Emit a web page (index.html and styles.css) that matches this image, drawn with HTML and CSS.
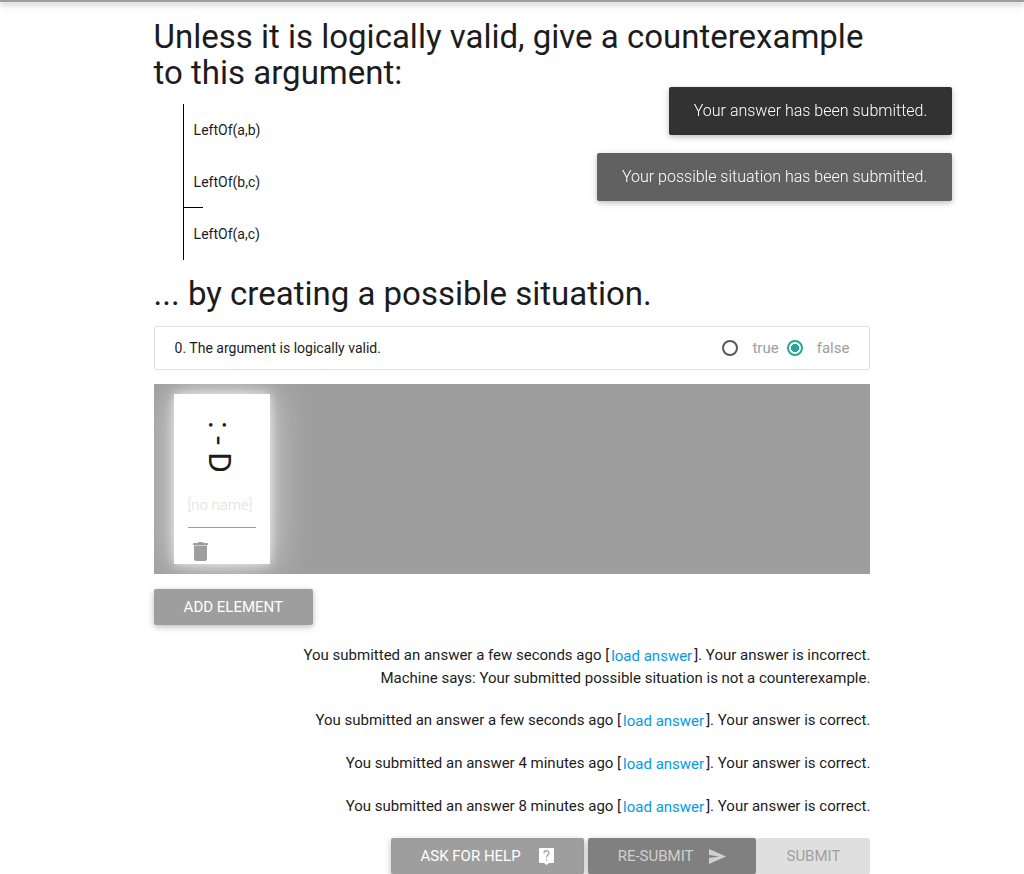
FILE: index.html
```html
<!DOCTYPE html>
<html lang="en">
<head>
<meta charset="utf-8">
<meta name="viewport" content="width=device-width, initial-scale=1">
<title>Create a counterexample</title>
<link rel="stylesheet" href="styles.css">
</head>
<body>
<header class="navbar"></header>
<main class="container">
  <h1 class="heading">Unless it is logically valid, give a counterexample to this argument:</h1>
  <div class="argument">
    <div class="premises">
      <div class="sentence">LeftOf(a,b)</div>
      <div class="sentence">LeftOf(b,c)</div>
    </div>
    <div class="sentence">LeftOf(a,c)</div>
  </div>
  <h2 class="heading">... by creating a possible situation.</h2>

  <div class="question" role="radiogroup" aria-labelledby="question-0">
    <span class="question-text" id="question-0">0. The argument is logically valid.</span>
    <label class="choice"><input class="radio" type="radio" name="valid" value="true">true</label>
    <label class="choice"><input class="radio" type="radio" name="valid" value="false" checked>false</label>
  </div>

  <section class="world">
    <div class="element">
      <div class="face"><span>:</span><span>-</span><span>D</span></div>
      <input class="name" type="text" placeholder="[no name]" aria-label="Name">
      <button class="trash" type="button" aria-label="Delete">
        <svg width="15" height="19" viewBox="0 0 15 19" fill="currentColor"><path d="M4 1 6 0h3l2 1h3q1 0 1 1v1H0V2q0-1 1-1zM1 4h13v13q0 2-2 2H3q-2 0-2-2z"/><path opacity=".5" d="M1 3h13v1H1z"/></svg>
      </button>
    </div>
  </section>
  <button class="btn" type="button">ADD ELEMENT</button>

  <section class="log">
    <p class="entry">You submitted an answer a few seconds ago [<a class="load" href="#">load answer</a>]. Your answer is incorrect.<br>Machine says: Your submitted possible situation is not a counterexample.</p>
    <p class="entry">You submitted an answer a few seconds ago [<a class="load" href="#">load answer</a>]. Your answer is correct.</p>
    <p class="entry">You submitted an answer 4 minutes ago [<a class="load" href="#">load answer</a>]. Your answer is correct.</p>
    <p class="entry">You submitted an answer 8 minutes ago [<a class="load" href="#">load answer</a>]. Your answer is correct.</p>
  </section>

  <div class="actions">
    <button class="btn help" type="button">ASK FOR HELP
      <svg width="15" height="17" viewBox="0 0 15 17"><path fill="#fff" d="M1 0h13q1 0 1 1v13q0 1-1 1H10l-2.5 2L5 15H1q-1 0-1-1V1q0-1 1-1z"/><path fill="none" stroke="#9e9e9e" stroke-width="1.2" d="M5 5.2C5 1.800 10 1.800 10 5c0 2-2.500 2.100-2.500 4.600M7.500 11v1.500"/></svg>
    </button>
    <button class="btn resubmit" type="button">RE-SUBMIT
      <svg width="17" height="15" viewBox="0 0 18 15" preserveAspectRatio="none" fill="currentColor"><path d="M0 0 18 7.500 0 15V9l11-1.500L0 6z"/></svg>
    </button>
    <button class="btn submit" type="button" disabled>SUBMIT</button>
  </div>
</main>
<div class="toasts" role="status">
  <div class="toast">Your answer has been submitted.</div>
  <div class="toast fading">Your possible situation has been submitted.</div>
</div>
</body>
</html>
```
FILE: styles.css
```css
* { box-sizing: border-box; }

body {
  margin: 0;
  background: #fff;
  color: #1c1c1c;
  font-family: Roboto, "Liberation Sans", sans-serif;
  font-size: 15px;
  line-height: 22px;
}

button, input { font-family: inherit; }

.navbar {
  height: 2px;
  background: #9e9e9e;
  box-shadow: 0 2px 5px rgba(0, 0, 0, 0.26), 0 2px 10px rgba(0, 0, 0, 0.2);
}

.container {
  width: 70%;
  margin: 0 auto;
  padding-top: 17px;
}

.heading {
  margin: 0;
  font-size: 33px;
  font-weight: 400;
  line-height: 36px;
}

.argument {
  margin: 13px 0 16px 29px;
  border-left: 1px solid #000;
  font-size: 14px;
}

.premises::after {
  content: "";
  display: block;
  width: 19px;
  height: 1px;
  margin-top: -1px;
  background: #000;
}

.sentence { padding: 15px 10px; }

.question {
  display: flex;
  align-items: center;
  gap: 8px;
  margin: 14px 0;
  padding: 10px 20px;
  border: 1px solid #e0e0e0;
  border-radius: 2px;
}

.question-text {
  flex: 1;
  font-size: 14px;
}

.choice {
  display: flex;
  align-items: center;
  gap: 14px;
  color: #9e9e9e;
}

.radio {
  appearance: none;
  width: 16px;
  height: 16px;
  margin: 0;
  border: 2px solid #5a5a5a;
  border-radius: 50%;
}

.radio:checked {
  border-color: #26a69a;
  background: radial-gradient(circle, #26a69a 4px, #fff 4px);
}

.world {
  display: flex;
  min-height: 190px;
  margin-bottom: 15px;
  padding: 10px 20px;
  overflow: hidden;
  background: #9e9e9e;
}

.element {
  display: flex;
  flex-direction: column;
  width: 96px;
  padding: 27px 14px 3px;
  background: #fff;
  box-shadow: 0 0 10px rgba(255, 255, 255, 0.7), 0 0 40px rgba(255, 255, 255, 0.7);
}

.face {
  display: flex;
  flex-direction: column;
  align-items: center;
  gap: 7px;
  height: 60px;
  padding-right: 3px;
  font-size: 32px;
  line-height: 32px;
}

.face span { writing-mode: vertical-rl; }

.name {
  width: 100%;
  height: 44px;
  margin: 3px 0 14px;
  padding: 0 0 2px;
  border: 0;
  border-bottom: 1px solid #9e9e9e;
  background: transparent;
  font-size: 15px;
  font-weight: 300;
}

.name::placeholder { color: #e0e0e0; opacity: 1; }

.trash {
  display: flex;
  align-self: flex-start;
  margin-left: 5px;
  padding: 0;
  border: 0;
  background: none;
  color: #9e9e9e;
}

.btn {
  display: flex;
  align-items: center;
  height: 36px;
  padding: 0 30px;
  border: 0;
  border-radius: 2px;
  background: #9e9e9e;
  box-shadow: 0 2px 5px rgba(0, 0, 0, 0.16), 0 2px 10px rgba(0, 0, 0, 0.12);
  color: #fff;
  font-size: 15px;
}

.log {
  margin: 19px 0 20px;
  text-align: right;
}

.entry { margin: 0 0 20px; }

.load {
  display: inline-block;
  padding: 0 2px;
  color: #039be5;
  text-decoration: none;
  vertical-align: middle;
}

.actions {
  display: flex;
  justify-content: flex-end;
}

.help { gap: 18px; margin-right: 4px; }

.resubmit {
  gap: 16px;
  background: #808080;
  color: #d0d0d0;
}

.submit {
  background: #dfdfdf;
  box-shadow: none;
  color: #9f9f9f;
}

.toasts {
  position: fixed;
  top: 10%;
  right: 7%;
  display: flex;
  flex-direction: column;
  align-items: flex-end;
  gap: 18px;
}

.toast {
  padding: 12px 25px;
  border-radius: 2px;
  background: #323232;
  box-shadow: 0 2px 5px rgba(0, 0, 0, 0.16), 0 2px 10px rgba(0, 0, 0, 0.12);
  color: #fff;
  font-size: 16px;
  font-weight: 300;
  line-height: 24px;
}

.fading { background: #616161; }
```
